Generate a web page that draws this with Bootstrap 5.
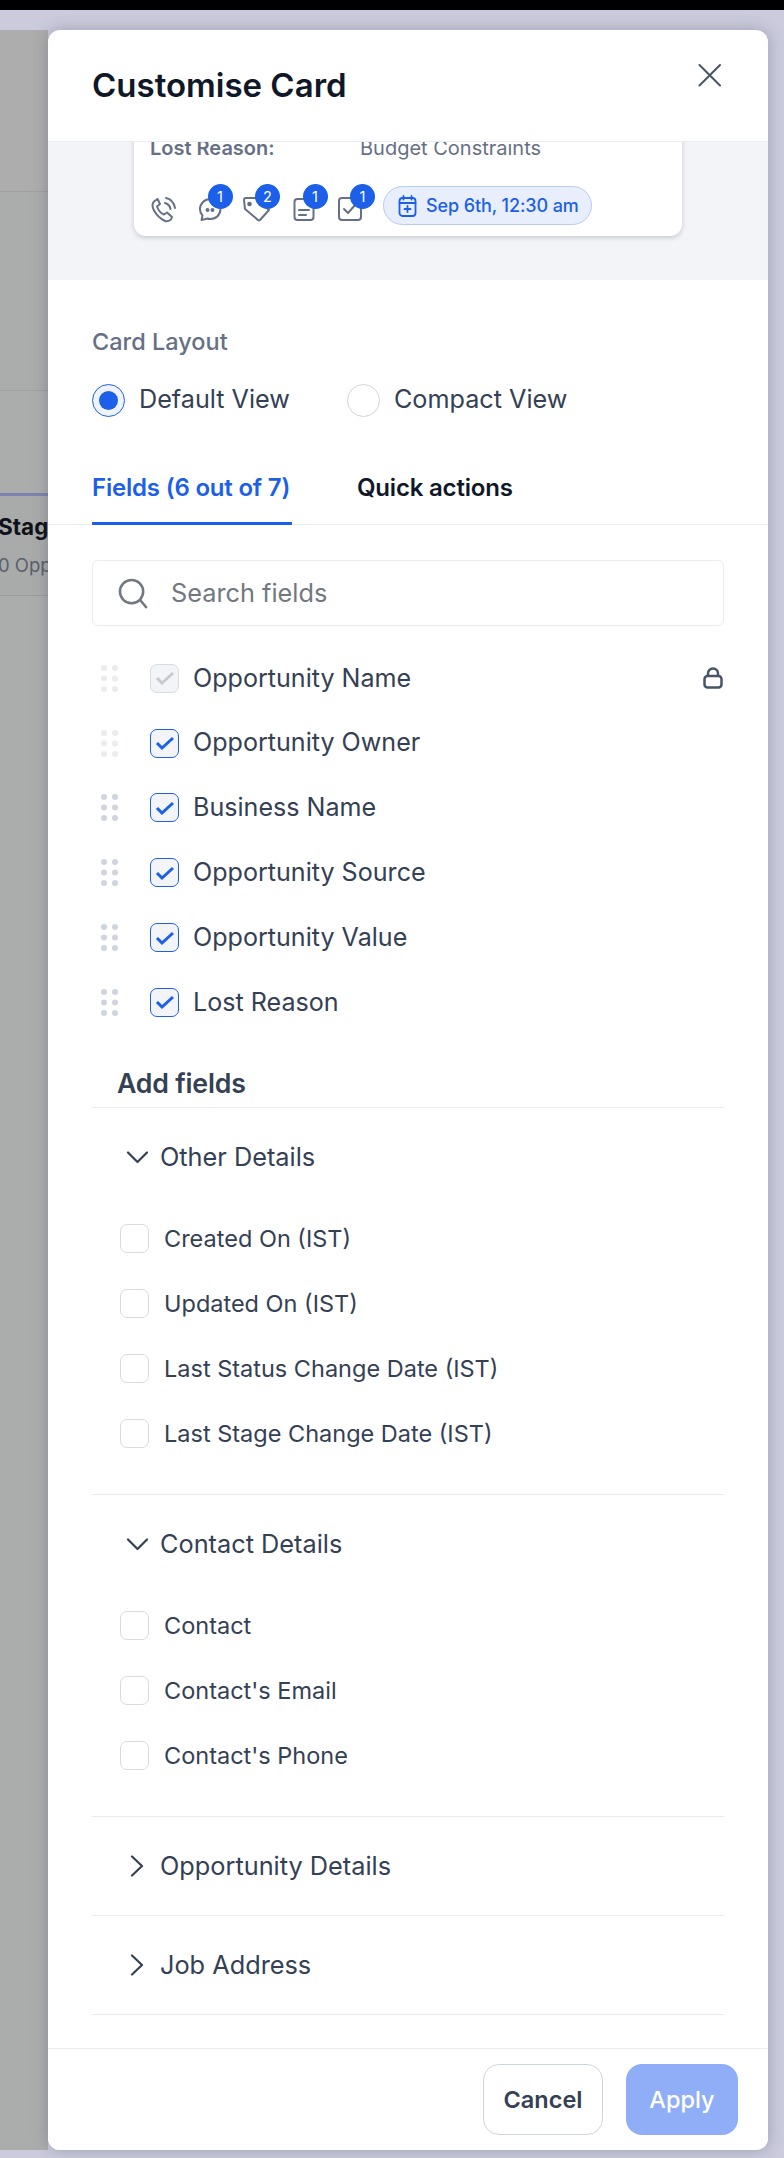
<!doctype html>
<html lang="en">
<head>
<meta charset="utf-8">
<link href="https://cdn.jsdelivr.net/npm/bootstrap@5.3.0/dist/css/bootstrap.min.css" rel="stylesheet">
<style>
body{background:#cbcbdd;font-family:Inter,"Liberation Sans",sans-serif;color:#344054;overflow:hidden;}
.topbar{height:10px;background:#000;}
.stage{position:relative;height:2148px;}
.backleft{position:absolute;left:0;top:20px;width:48px;height:2120px;background:#abadad;}
.seg1{position:absolute;left:0;right:0;top:0;height:162px;background:#adadad;border-bottom:1px solid #a0a0a0;}
.seg2{position:absolute;left:0;right:0;top:162px;height:199px;background:#abacac;border-bottom:1px solid #a0a0a0;}
.stag-a{position:absolute;top:463px;left:0;right:0;height:3px;background:#7a86ad;}
.seg3{position:absolute;left:0;right:0;top:466px;height:100px;background:#a9abab;border-bottom:1px solid #9c9c9c;}
.stg{position:absolute;left:-2px;top:16px;font-weight:700;font-size:22.5px;color:#101018;line-height:30px;white-space:nowrap;}
.opp{position:absolute;left:-2px;top:56px;font-size:18.5px;color:#5b5f68;white-space:nowrap;line-height:26px;}
.panel{position:absolute;left:48px;top:20px;width:720px;height:2120px;background:#fff;border-radius:12px;box-shadow:0 0 16px rgba(60,60,90,.3);overflow:hidden;}
.pscroll{flex:1 1 auto;min-height:0;overflow:hidden;}
.phead{height:112px;padding:0 44px;border-bottom:1px solid #eaecf0;}
.ptitle{font-size:33px;font-weight:600;color:#101828;margin:30px 0 0;line-height:50px;}
.xbtn{background:none;border:0;padding:0;margin:33px 3px 0 0;height:24px;line-height:0;}
.preview{height:138px;background:#f2f4f7;position:relative;overflow:hidden;}
.pcard{margin-left:86px;margin-top:-60px;width:548px;height:154px;background:#fff;border-radius:12px;box-shadow:0 2px 5px rgba(16,24,40,.18);padding:60px 16px 0 16px;}
.lost{font-size:20px;line-height:18px;color:#667085;margin-top:-3px;white-space:nowrap;}
.lost b{font-weight:600;width:210px;}
.acts{margin-top:28.5px;height:40px;}
.act{position:relative;width:31px;height:30px;margin-right:16.5px;line-height:0;}
.act svg{display:block;margin-top:5px;overflow:visible;}
.bub{position:absolute;width:25px;height:25px;border-radius:50%;background:#1c5fe8;color:#fff;font-size:14.5px;line-height:25px;text-align:center;top:-7px;left:10px;}
.datepill{gap:9px;height:39px;width:209px;padding-left:14px;border:1px solid #b7cbf3;background:#e8eefb;border-radius:20px;font-size:18px;color:#1c5fe8;font-weight:500;margin-left:-4.5px;letter-spacing:-.1px;white-space:nowrap;}
.layoutsec{padding:47px 44px 0;}
.lbl{font-size:23.5px;line-height:30px;font-weight:500;color:#667085;margin-bottom:26px;}
.radios{height:34px;}
.rad{width:33px;height:33px;border-radius:50%;border:1px solid #d0d5dd;background:#fff;flex:none;position:relative;}
.rad.on{border-color:#1c5fe8;background:#eef3fd;}
.rad.on::after{content:"";position:absolute;left:6px;top:6px;width:19px;height:19px;border-radius:50%;background:#1c5fe8;}
.radt{font-size:25.2px;color:#344054;margin-left:14px;margin-right:57px;white-space:nowrap;}
.tabsrow{margin-top:48px;height:60px;border-bottom:1px solid #eaecf0;padding-left:44px;}
.tabi{font-size:24px;font-weight:600;line-height:46px;white-space:nowrap;color:#101828;height:60px;letter-spacing:-.2px;}
.tabi.on{color:#1c5fe8;border-bottom:3px solid #1c5fe8;width:200px;margin-right:65px;}
.sbox{margin:35px 44px 0;height:66px;border:1px solid #eaecf0;border-radius:6px;padding-left:25px;}
.sbox span{font-size:25.3px;color:#72787f;margin-left:22px;}
.flist{padding:0 0 0 44px;margin-top:20px;}
.frow{height:64.8px;position:relative;}
.grip{width:17px;margin-left:9px;margin-right:32px;flex:none;}
.cb{width:29px;height:29px;border-radius:7px;border:1.5px solid #1c5fe8;background:#f2f4f7;flex:none;}
.cb.dis{border-color:#d8dbe0;}
.cb.off{background:#fff;border-color:#d8dbe0;}
.ft{font-size:25.1px;color:#344054;margin-left:14px;white-space:nowrap;}
.gbody .ft{font-size:23.5px;margin-left:15px;}
.lockic{position:absolute;left:611px;top:21px;line-height:0;}
.addh{font-size:26.7px;font-weight:600;margin:28px 44px 0 44px;padding:0 0 4px 25px;border-bottom:1px solid #eaecf0;line-height:40px;color:#344054;letter-spacing:-.2px;}
.grp{margin:0 44px;border-bottom:1px solid #eaecf0;}
.ghead{height:98px;padding-left:34px;font-size:25.3px;color:#344054;}
.ghead svg{margin-right:12px;flex:none;}
.gbody{padding:0 0 28px 28px;}
.grow{height:65px;}
.pfoot{height:102px;border-top:1px solid #eaecf0;gap:23px;padding:15px 30px 0 0;background:#fff;flex:none;}
.cbtn{width:120px;height:71px;border-radius:16px;font-size:23.5px;font-weight:600;border:1px solid #d0d5dd;background:#fff;color:#344054;padding:0;}
.abtn{width:112px;height:71px;border-radius:16px;font-size:23.5px;font-weight:500;border:0;background:#90aef7;color:#fff;padding:0;}
</style>
</head>
<body>
<div class="topbar"></div>
<div class="stage">
  <div class="backleft">
    <div class="seg1"></div><div class="seg2"></div>
    <div class="stag-a"></div>
    <div class="seg3"><div class="stg">Stag</div><div class="opp">0 Opp</div></div>
  </div>
  <div class="panel d-flex flex-column">
    <div class="pscroll">
    <div class="phead d-flex justify-content-between">
      <h1 class="ptitle">Customise Card</h1>
      <button class="xbtn" type="button" aria-label="Close"><svg width="24" height="24" viewBox="0 0 24 24" fill="none" stroke="#475467" stroke-width="2" stroke-linecap="round"><path d="M2.500 2 23 22.500M23 2 2.500 22.500"/></svg></button>
    </div>
    <div class="preview">
      <div class="pcard">
        <div class="lost d-flex"><b>Lost Reason:</b><span>Budget Constraints</span></div>
        <div class="acts d-flex align-items-center">
          <div class="act"><svg width="30" height="26" viewBox="0 0 30 26" fill="none" stroke="#667085" stroke-width="2" stroke-linecap="round" stroke-linejoin="round"><path d="M7.500 3 4 5.500c-2 2-2 5 0 9 3 5.500 7 8.500 11 10.500 2 1 4 0 6-1.500l1-2.500-5-4.500-3 2c-3-1-6-5-7-8l3-2.500z"/><path d="M15 7c3 1 5 3 5.500 6M16 2c5 1 8 5 9 10"/></svg></div>
          <div class="act"><svg width="30" height="26" viewBox="0 0 30 26" fill="none" stroke="#667085" stroke-width="2" stroke-linejoin="round"><path d="M12.500 3C6.500 3 2 7.500 2 13c0 3 1 5 2.500 6.500L3.500 24l6-1.500c1 .4 2 .5 3 .5 6 0 10-4.500 10-10S18.500 3 12.500 3z"/><circle cx="9.500" cy="14" r="1" fill="#667085"/><circle cx="14.500" cy="14" r="1" fill="#667085"/></svg><span class="bub">1</span></div>
          <div class="act"><svg width="30" height="26" viewBox="0 0 30 26" fill="none" stroke="#667085" stroke-width="2" stroke-linejoin="round"><path d="M-1 4a2 2 0 0 1 2-2h10l13 12-9 10q-1 1-2 0L0 13z"/><circle cx="4.500" cy="8" r="1.300" fill="#667085"/></svg><span class="bub">2</span></div>
          <div class="act"><svg width="30" height="26" viewBox="0 0 30 26" fill="none" stroke="#667085" stroke-width="2" stroke-linecap="round"><rect x="1.500" y="3" width="19" height="21" rx="3"/><path d="M6 14h10M6 19h7"/></svg><span class="bub">1</span></div>
          <div class="act"><svg width="30" height="26" viewBox="0 0 30 26" fill="none" stroke="#667085" stroke-width="2" stroke-linecap="round" stroke-linejoin="round"><rect x="-1" y="2" width="22" height="22" rx="3"/><path d="M4 13l4 4 8-9"/></svg><span class="bub">1</span></div>
          <div class="datepill d-flex align-items-center"><svg width="19" height="22" viewBox="0 0 19 22" fill="none" stroke="#1c5fe8" stroke-width="1.800" stroke-linecap="round"><rect x="1.500" y="3" width="16" height="18" rx="3"/><path d="M1.500 8h16M5.500 1v3.500M13.500 1v3.500M9.500 11v6M6.500 14h6"/></svg>Sep 6th, 12:30 am</div>
        </div>
      </div>
    </div>
    <div class="layoutsec">
      <div class="lbl">Card Layout</div>
      <div class="radios d-flex align-items-center">
        <span class="rad on"></span><span class="radt">Default View</span>
        <span class="rad"></span><span class="radt">Compact View</span>
      </div>
    </div>
    <div class="tabsrow d-flex">
      <div class="tabi on">Fields (6 out of 7)</div>
      <div class="tabi">Quick actions</div>
    </div>
    <div class="sbox d-flex align-items-center">
      <svg width="31" height="31" viewBox="0 0 32 32" fill="none" stroke="#72787f" stroke-width="2.600" stroke-linecap="round"><circle cx="14" cy="14" r="12"/><path d="M23 23l6 7"/></svg>
      <span>Search fields</span>
    </div>
    <div class="flist">
      <div class="frow d-flex align-items-center">
        <svg class="grip" width="17" height="27" viewBox="0 0 17 27" fill="#eaecf0"><circle cx="3" cy="3" r="3"/><circle cx="14" cy="3" r="3"/><circle cx="3" cy="13.500" r="3"/><circle cx="14" cy="13.500" r="3"/><circle cx="3" cy="24" r="3"/><circle cx="14" cy="24" r="3"/></svg>
        <span class="cb dis d-flex align-items-center justify-content-center"><svg width="20" height="16" viewBox="0 0 20 16" fill="none" stroke="#c6c9ce" stroke-width="3"><path d="M2 8l5 5 11-10"/></svg></span><span class="ft">Opportunity Name</span>
        <span class="lockic"><svg width="20" height="22" viewBox="0 0 20 22" fill="none" stroke="#475467" stroke-width="2.500"><rect x="1.500" y="9" width="17" height="11.500" rx="3"/><path d="M5 9V6.500a5 5 0 0 1 10 0V9"/></svg></span>
      </div>
      <div class="frow d-flex align-items-center">
        <svg class="grip" width="17" height="27" viewBox="0 0 17 27" fill="#eaecf0"><circle cx="3" cy="3" r="3"/><circle cx="14" cy="3" r="3"/><circle cx="3" cy="13.500" r="3"/><circle cx="14" cy="13.500" r="3"/><circle cx="3" cy="24" r="3"/><circle cx="14" cy="24" r="3"/></svg>
        <span class="cb d-flex align-items-center justify-content-center"><svg width="20" height="16" viewBox="0 0 20 16" fill="none" stroke="#1c5fe8" stroke-width="3"><path d="M2 8l5 5 11-10"/></svg></span><span class="ft">Opportunity Owner</span>
      </div>
      <div class="frow d-flex align-items-center">
        <svg class="grip" width="17" height="27" viewBox="0 0 17 27" fill="#d0d5dd"><circle cx="3" cy="3" r="3"/><circle cx="14" cy="3" r="3"/><circle cx="3" cy="13.500" r="3"/><circle cx="14" cy="13.500" r="3"/><circle cx="3" cy="24" r="3"/><circle cx="14" cy="24" r="3"/></svg>
        <span class="cb d-flex align-items-center justify-content-center"><svg width="20" height="16" viewBox="0 0 20 16" fill="none" stroke="#1c5fe8" stroke-width="3"><path d="M2 8l5 5 11-10"/></svg></span><span class="ft">Business Name</span>
      </div>
      <div class="frow d-flex align-items-center">
        <svg class="grip" width="17" height="27" viewBox="0 0 17 27" fill="#d0d5dd"><circle cx="3" cy="3" r="3"/><circle cx="14" cy="3" r="3"/><circle cx="3" cy="13.500" r="3"/><circle cx="14" cy="13.500" r="3"/><circle cx="3" cy="24" r="3"/><circle cx="14" cy="24" r="3"/></svg>
        <span class="cb d-flex align-items-center justify-content-center"><svg width="20" height="16" viewBox="0 0 20 16" fill="none" stroke="#1c5fe8" stroke-width="3"><path d="M2 8l5 5 11-10"/></svg></span><span class="ft">Opportunity Source</span>
      </div>
      <div class="frow d-flex align-items-center">
        <svg class="grip" width="17" height="27" viewBox="0 0 17 27" fill="#d0d5dd"><circle cx="3" cy="3" r="3"/><circle cx="14" cy="3" r="3"/><circle cx="3" cy="13.500" r="3"/><circle cx="14" cy="13.500" r="3"/><circle cx="3" cy="24" r="3"/><circle cx="14" cy="24" r="3"/></svg>
        <span class="cb d-flex align-items-center justify-content-center"><svg width="20" height="16" viewBox="0 0 20 16" fill="none" stroke="#1c5fe8" stroke-width="3"><path d="M2 8l5 5 11-10"/></svg></span><span class="ft">Opportunity Value</span>
      </div>
      <div class="frow d-flex align-items-center">
        <svg class="grip" width="17" height="27" viewBox="0 0 17 27" fill="#d0d5dd"><circle cx="3" cy="3" r="3"/><circle cx="14" cy="3" r="3"/><circle cx="3" cy="13.500" r="3"/><circle cx="14" cy="13.500" r="3"/><circle cx="3" cy="24" r="3"/><circle cx="14" cy="24" r="3"/></svg>
        <span class="cb d-flex align-items-center justify-content-center"><svg width="20" height="16" viewBox="0 0 20 16" fill="none" stroke="#1c5fe8" stroke-width="3"><path d="M2 8l5 5 11-10"/></svg></span><span class="ft">Lost Reason</span>
      </div>
    </div>
    <div class="addh">Add fields</div>
    <div class="grp">
      <div class="ghead d-flex align-items-center"><svg width="22" height="14" viewBox="0 0 22 14" fill="none" stroke="#344054" stroke-width="2.200" stroke-linecap="round" stroke-linejoin="round"><path d="M2 2.500l9.500 9.500L21 2.500"/></svg>Other Details</div>
      <div class="gbody">
        <div class="grow d-flex align-items-center"><span class="cb off"></span><span class="ft">Created On (IST)</span></div>
        <div class="grow d-flex align-items-center"><span class="cb off"></span><span class="ft">Updated On (IST)</span></div>
        <div class="grow d-flex align-items-center"><span class="cb off"></span><span class="ft">Last Status Change Date (IST)</span></div>
        <div class="grow d-flex align-items-center"><span class="cb off"></span><span class="ft">Last Stage Change Date (IST)</span></div>
      </div>
    </div>
    <div class="grp">
      <div class="ghead d-flex align-items-center"><svg width="22" height="14" viewBox="0 0 22 14" fill="none" stroke="#344054" stroke-width="2.200" stroke-linecap="round" stroke-linejoin="round"><path d="M2 2.500l9.500 9.500L21 2.500"/></svg>Contact Details</div>
      <div class="gbody">
        <div class="grow d-flex align-items-center"><span class="cb off"></span><span class="ft">Contact</span></div>
        <div class="grow d-flex align-items-center"><span class="cb off"></span><span class="ft">Contact's Email</span></div>
        <div class="grow d-flex align-items-center"><span class="cb off"></span><span class="ft">Contact's Phone</span></div>
      </div>
    </div>
    <div class="grp">
      <div class="ghead d-flex align-items-center"><svg width="22" height="22" viewBox="0 0 22 22" fill="none" stroke="#344054" stroke-width="2.200" stroke-linecap="round" stroke-linejoin="round"><path d="M6 1.500l10 9.500-10 9.500"/></svg>Opportunity Details</div>
    </div>
    <div class="grp">
      <div class="ghead d-flex align-items-center"><svg width="22" height="22" viewBox="0 0 22 22" fill="none" stroke="#344054" stroke-width="2.200" stroke-linecap="round" stroke-linejoin="round"><path d="M6 1.500l10 9.500-10 9.500"/></svg>Job Address</div>
    </div>
    </div>
    <div class="pfoot d-flex justify-content-end">
      <button class="btn cbtn" type="button">Cancel</button>
      <button class="btn abtn" type="button">Apply</button>
    </div>
  </div>
</div>
<script src="https://cdn.jsdelivr.net/npm/bootstrap@5.3.0/dist/js/bootstrap.bundle.min.js"></script>
</body>
</html>
